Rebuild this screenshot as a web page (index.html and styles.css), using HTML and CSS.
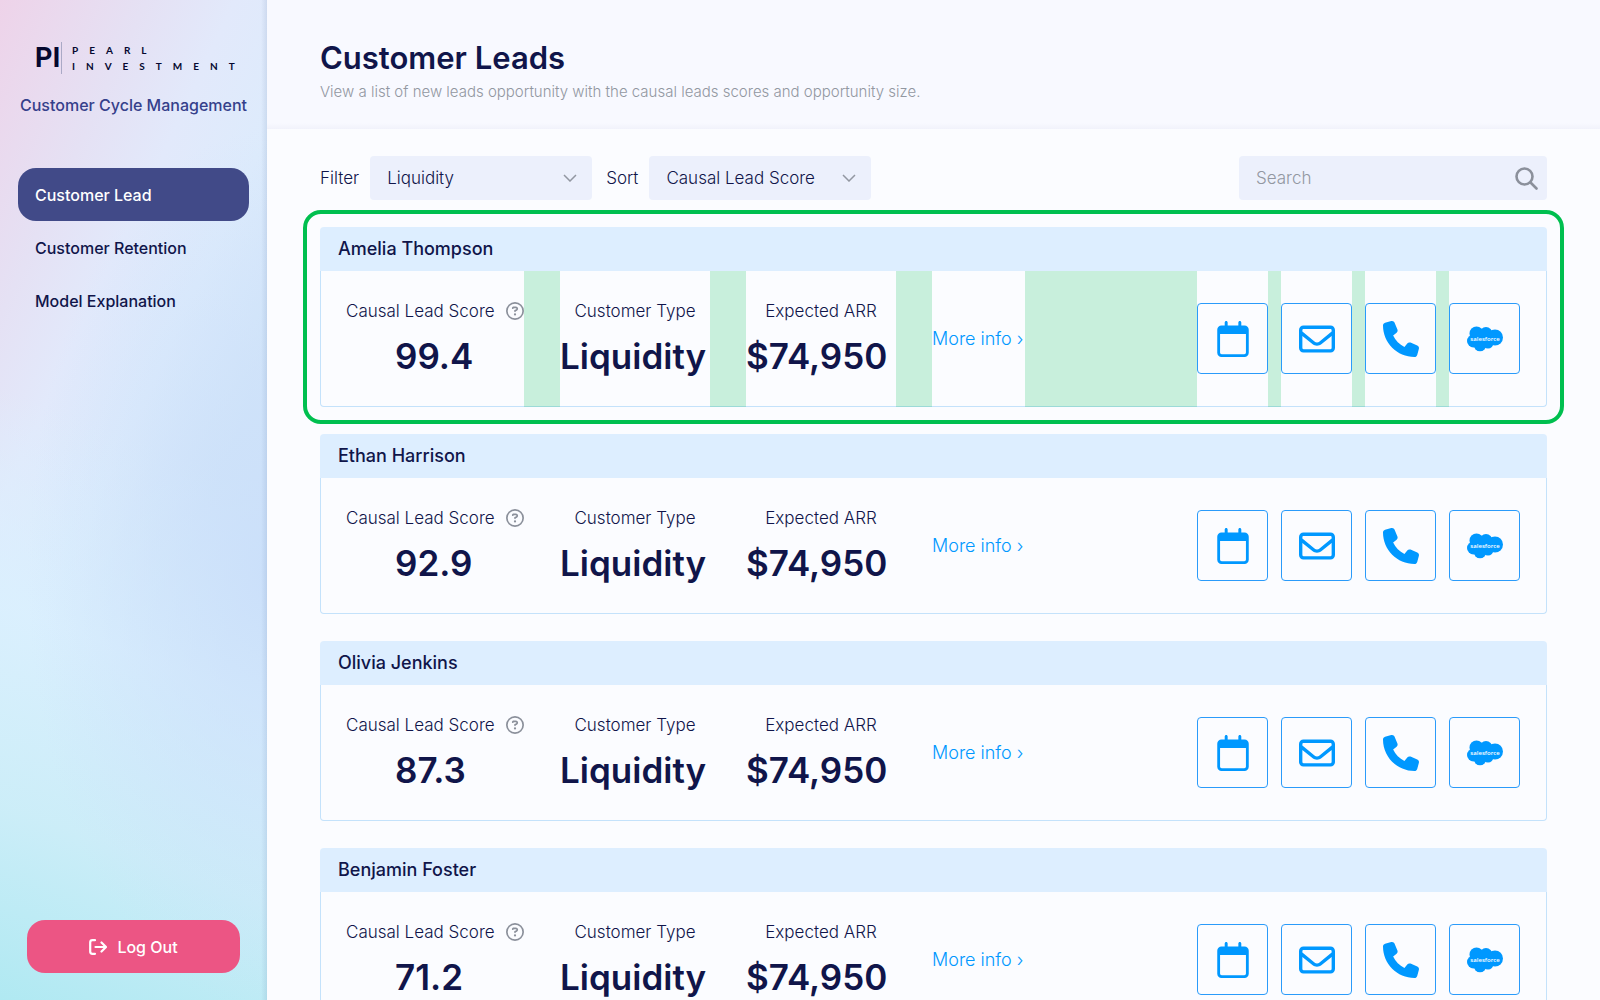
FILE: index.html
```html
<!DOCTYPE html>
<html lang="en">
<head>
<meta charset="utf-8">
<meta name="viewport" content="width=device-width, initial-scale=1">
<title>Customer Leads</title>
<link rel="stylesheet" href="styles.css">
</head>
<body>
<svg class="sprite" aria-hidden="true">
  <symbol id="calendar" viewBox="0 0 448 512"><path d="M148 22c0-12-9-22-21-22s-21 10-21 22V64H60C27 64 0 91 0 124V452c0 33 27 60 60 60H388c33 0 60-27 60-60V124c0-33-27-60-60-60H342V22c0-12-9-22-21-22s-21 10-21 22V64H148V22zM40 184H408V448c0 13-11 24-24 24H64c-13 0-24-11-24-24V184z"/></symbol>
  <symbol id="envelope" viewBox="0 0 512 512"><path d="M64 112c-8.8 0-16 7.2-16 16v22.1L220.5 291.7c20.700 17 50.400 17 71.100 0L464 150.100V128c0-8.800-7.200-16-16-16H64zM48 212.200V384c0 8.800 7.200 16 16 16H448c8.800 0 16-7.200 16-16V212.200L322 328.800c-38.400 31.500-93.700 31.500-132 0L48 212.200zM0 128C0 92.700 28.700 64 64 64H448c35.300 0 64 28.700 64 64V384c0 35.300-28.700 64-64 64H64c-35.300 0-64-28.700-64-64V128z"/></symbol>
  <symbol id="phone" viewBox="0 0 512 512"><path d="M164.900 24.600c-7.700-18.600-28-28.500-47.400-23.200l-88 24C12.100 30.200 0 46 0 64C0 311.400 200.600 512 448 512c18 0 33.800-12.100 38.600-29.500l24-88c5.300-19.400-4.600-39.700-23.200-47.400l-96-40c-16.300-6.800-35.200-2.100-46.300 11.600L304.700 368C234.300 334.700 177.300 277.700 144 207.300L193.300 167c13.700-11.200 18.400-30 11.600-46.300l-40-96z"/></symbol>
  <symbol id="cloud" viewBox="0 0 36 26"><g><circle cx="9.500" cy="7.500" r="7"/><circle cx="19" cy="7.500" r="6.500"/><circle cx="28" cy="11.500" r="8"/><circle cx="6.500" cy="15" r="6.500"/><circle cx="13" cy="19" r="6.300"/><circle cx="21" cy="17" r="5.500"/><rect x="7" y="7" width="20" height="12"/></g><text class="cloud-text" x="18" y="15" text-anchor="middle">salesforce</text></symbol>
  <symbol id="help" viewBox="0 0 512 512"><path d="M464 256A208 208 0 1 0 48 256a208 208 0 1 0 416 0zM0 256a256 256 0 1 1 512 0A256 256 0 1 1 0 256zm169.800-90.700c7.900-22.300 29.100-37.300 52.800-37.300h58.300c34.900 0 63.100 28.300 63.100 63.100c0 22.600-12.100 43.500-31.700 54.800L280 264.400c-.2 13-10.900 23.600-24 23.600c-13.300 0-24-10.700-24-24V250.500c0-8.600 4.600-16.500 12.100-20.800l44.300-25.400c4.700-2.700 7.600-7.700 7.600-13.100c0-8.400-6.800-15.100-15.100-15.100H222.600c-3.400 0-6.400 2.100-7.500 5.300l-.4 1.200c-4.400 12.500-18.200 19-30.600 14.600s-19-18.200-14.600-30.600l.4-1.200zM224 352a32 32 0 1 1 64 0 32 32 0 1 1-64 0z"/></symbol>
</svg>
<div class="app">
  <aside class="sidebar">
    <div class="brand">
      <div class="logo">
        <span class="logo-mark">PI</span>
        <span class="logo-name"><span>PEARL</span><span>INVESTMENT</span></span>
      </div>
      <p class="product">Customer Cycle Management</p>
    </div>
    <nav class="nav">
      <a class="nav-link active" href="#lead" aria-current="page">Customer Lead</a>
      <a class="nav-link" href="#retention">Customer Retention</a>
      <a class="nav-link" href="#model">Model Explanation</a>
    </nav>
    <button class="logout" type="button">
      <svg class="logout-icon" viewBox="0 0 18 16" aria-hidden="true"><path d="M6 1.200H3.500A2.300 2.300 0 0 0 1.200 3.500v9a2.300 2.300 0 0 0 2.300 2.300H6M6.500 8h10M12.500 3.500 17 8l-4.500 4.500"/></svg>
      Log Out
    </button>
  </aside>
  <main class="main">
    <header class="page-header">
      <h1>Customer Leads</h1>
      <p>View a list of new leads opportunity with the causal leads scores and opportunity size.</p>
    </header>
    <div class="content">
      <form class="toolbar">
        <label for="filter">Filter</label>
        <span class="select">
          <select id="filter"><option>Liquidity</option></select>
          <svg class="chevron" viewBox="0 0 14 8" aria-hidden="true"><path d="M1 1l6 6 6-6"/></svg>
        </span>
        <label class="sort-label" for="sort">Sort</label>
        <span class="select">
          <select id="sort"><option>Causal Lead Score</option></select>
          <svg class="chevron" viewBox="0 0 14 8" aria-hidden="true"><path d="M1 1l6 6 6-6"/></svg>
        </span>
        <span class="search">
          <input type="search" placeholder="Search" aria-label="Search">
          <svg class="search-icon" viewBox="0 0 23 23" aria-hidden="true"><circle cx="9.500" cy="9.500" r="8"/><path d="M15.500 15.500l6 6"/></svg>
        </span>
      </form>

      <article class="card highlighted">
        <h2>Amelia Thompson</h2>
        <div class="card-body">
          <div class="stat score"><span class="label">Causal Lead Score <svg class="help"><use href="#help"/></svg></span><strong>99.4</strong></div>
          <i class="gap"></i>
          <div class="stat"><span class="label">Customer Type</span><strong>Liquidity</strong></div>
          <i class="gap"></i>
          <div class="stat"><span class="label">Expected ARR</span><strong>$74,950</strong></div>
          <i class="gap"></i>
          <a class="more" href="#amelia">More info ›</a>
          <i class="gap fill"></i>
          <button class="action" type="button" aria-label="Schedule"><svg class="icon"><use href="#calendar"/></svg></button>
          <i class="gap small"></i>
          <button class="action" type="button" aria-label="Email"><svg class="icon"><use href="#envelope"/></svg></button>
          <i class="gap small"></i>
          <button class="action" type="button" aria-label="Call"><svg class="icon"><use href="#phone"/></svg></button>
          <i class="gap small"></i>
          <button class="action" type="button" aria-label="Salesforce"><svg class="icon"><use href="#cloud"/></svg></button>
        </div>
      </article>

      <article class="card">
        <h2>Ethan Harrison</h2>
        <div class="card-body">
          <div class="stat score"><span class="label">Causal Lead Score <svg class="help"><use href="#help"/></svg></span><strong>92.9</strong></div>
          <i class="gap"></i>
          <div class="stat"><span class="label">Customer Type</span><strong>Liquidity</strong></div>
          <i class="gap"></i>
          <div class="stat"><span class="label">Expected ARR</span><strong>$74,950</strong></div>
          <i class="gap"></i>
          <a class="more" href="#ethan">More info ›</a>
          <i class="gap fill"></i>
          <button class="action" type="button" aria-label="Schedule"><svg class="icon"><use href="#calendar"/></svg></button>
          <i class="gap small"></i>
          <button class="action" type="button" aria-label="Email"><svg class="icon"><use href="#envelope"/></svg></button>
          <i class="gap small"></i>
          <button class="action" type="button" aria-label="Call"><svg class="icon"><use href="#phone"/></svg></button>
          <i class="gap small"></i>
          <button class="action" type="button" aria-label="Salesforce"><svg class="icon"><use href="#cloud"/></svg></button>
        </div>
      </article>

      <article class="card">
        <h2>Olivia Jenkins</h2>
        <div class="card-body">
          <div class="stat score"><span class="label">Causal Lead Score <svg class="help"><use href="#help"/></svg></span><strong>87.3</strong></div>
          <i class="gap"></i>
          <div class="stat"><span class="label">Customer Type</span><strong>Liquidity</strong></div>
          <i class="gap"></i>
          <div class="stat"><span class="label">Expected ARR</span><strong>$74,950</strong></div>
          <i class="gap"></i>
          <a class="more" href="#olivia">More info ›</a>
          <i class="gap fill"></i>
          <button class="action" type="button" aria-label="Schedule"><svg class="icon"><use href="#calendar"/></svg></button>
          <i class="gap small"></i>
          <button class="action" type="button" aria-label="Email"><svg class="icon"><use href="#envelope"/></svg></button>
          <i class="gap small"></i>
          <button class="action" type="button" aria-label="Call"><svg class="icon"><use href="#phone"/></svg></button>
          <i class="gap small"></i>
          <button class="action" type="button" aria-label="Salesforce"><svg class="icon"><use href="#cloud"/></svg></button>
        </div>
      </article>

      <article class="card">
        <h2>Benjamin Foster</h2>
        <div class="card-body">
          <div class="stat score"><span class="label">Causal Lead Score <svg class="help"><use href="#help"/></svg></span><strong>71.2</strong></div>
          <i class="gap"></i>
          <div class="stat"><span class="label">Customer Type</span><strong>Liquidity</strong></div>
          <i class="gap"></i>
          <div class="stat"><span class="label">Expected ARR</span><strong>$74,950</strong></div>
          <i class="gap"></i>
          <a class="more" href="#benjamin">More info ›</a>
          <i class="gap fill"></i>
          <button class="action" type="button" aria-label="Schedule"><svg class="icon"><use href="#calendar"/></svg></button>
          <i class="gap small"></i>
          <button class="action" type="button" aria-label="Email"><svg class="icon"><use href="#envelope"/></svg></button>
          <i class="gap small"></i>
          <button class="action" type="button" aria-label="Call"><svg class="icon"><use href="#phone"/></svg></button>
          <i class="gap small"></i>
          <button class="action" type="button" aria-label="Salesforce"><svg class="icon"><use href="#cloud"/></svg></button>
        </div>
      </article>
    </div>
  </main>
</div>
</body>
</html>
```
FILE: styles.css
```css
:root {
  --navy: #10154a;
  --grey: #9297a1;
  --blue: #0098ff;
  --pale: #ddeeff;
  --field: #ecf0fc;
}

* { box-sizing: border-box; }

body {
  margin: 0;
  background: #fbfcff;
  color: var(--navy);
  font-family: Inter, "Liberation Sans", sans-serif;
  font-size: 17px;
  line-height: 24px;
  font-weight: 300;
}

h1, h2, p { margin: 0; }
a { color: inherit; text-decoration: none; }
button, input, select { font: inherit; color: inherit; }
button { cursor: pointer; }
.sprite { display: none; }

.app { display: flex; height: 100vh; overflow: hidden; }

/* Sidebar */
.sidebar {
  flex: 0 0 267px;
  display: flex;
  flex-direction: column;
  padding: 41px 18px 27px;
  background:
    linear-gradient(to left, rgba(70, 100, 150, 0.12), transparent 6px),
    radial-gradient(ellipse 240px 440px at 100% 57%, rgba(202, 223, 250, 0.9), transparent),
    linear-gradient(20deg, #b0e9f2 0%, rgba(203, 238, 248, 0.9) 18%, rgba(218, 240, 254, 0.9) 36%, transparent 56%),
    linear-gradient(115deg, #eed3e9 0%, #e5e1f4 20%, #e2e9fb 32%, #ddebfc 45%, #d4e6f9 60%);
}

.brand { display: flex; flex-direction: column; gap: 18px; }
.logo { display: flex; height: 34px; align-items: center; padding-left: 17px; color: #05082f; }
.logo-mark {
  width: 27px;
  border-right: 1px solid #aaa9c6;
  font: 700 27px/32px Roboto, sans-serif;
}
.logo-name {
  display: flex;
  flex-direction: column;
  padding-left: 10px;
  font: 700 10px/16px Lato, sans-serif;
  letter-spacing: 11px;
}
.product { color: #35408b; font-size: 16px; font-weight: 500; text-align: center; white-space: nowrap; }

.nav { display: flex; flex-direction: column; margin-top: 51px; }
.nav-link { padding: 15px 17px 14px; border-radius: 18px; font-size: 16px; font-weight: 500; }
.nav-link.active { background: #414a88; color: #fff; }

.logout {
  display: flex;
  justify-content: center;
  align-items: center;
  gap: 10px;
  height: 53px;
  margin: auto 9px 0;
  border: 0;
  border-radius: 18px;
  background: #ec5584;
  color: #fff;
  font-size: 16px;
  font-weight: 500;
}
.logout-icon { width: 18px; height: 16px; fill: none; stroke: currentColor; stroke-width: 2.2; stroke-linecap: round; stroke-linejoin: round; }

/* Page */
.main { flex: 1; min-width: 0; }
.page-header {
  height: 129px;
  padding: 38px 53px 0;
  background: linear-gradient(to top, #f1f2fb, #f8f9ff 6px);
}
h1 { font-size: 31px; line-height: 40px; font-weight: 600; }
.page-header p { margin-top: 2px; color: var(--grey); font-size: 15px; }

.content { display: flex; flex-direction: column; gap: 27px; padding: 27px 53px; }
.toolbar { display: flex; align-items: center; height: 44px; }
.toolbar label { margin-right: 11px; }
.toolbar .sort-label { margin-left: 14px; }

.select { display: grid; align-items: center; width: 222px; }
.select > * { grid-area: 1 / 1; }
.select select {
  appearance: none;
  width: 100%;
  height: 44px;
  padding: 0 36px 0 17px;
  border: 0;
  border-radius: 4px;
  background: var(--field);
}
.chevron { justify-self: end; width: 14px; height: 8px; margin-right: 15px; fill: none; stroke: var(--grey); stroke-width: 1.5; pointer-events: none; }

.search {
  display: flex;
  align-items: center;
  width: 308px;
  height: 44px;
  margin-left: auto;
  padding: 0 9px 0 17px;
  border-radius: 4px;
  background: var(--field);
}
.search input { flex: 1; min-width: 0; padding: 0; border: 0; background: none; appearance: none; }
.search input::placeholder { color: var(--grey); opacity: 1; }
.search-icon { width: 23px; height: 23px; fill: none; stroke: #8b909b; stroke-width: 2.6; stroke-linecap: round; }

/* Lead card */
.card { position: relative; }
.card h2 {
  height: 44px;
  padding: 10px 18px;
  border-radius: 4px 4px 0 0;
  background: var(--pale);
  font-size: 18px;
  font-weight: 500;
}
.card-body {
  display: flex;
  align-items: center;
  height: 136px;
  padding: 0 26px 0 25px;
  border: 1px solid #c4e2fb;
  border-top: 0;
  border-radius: 0 0 4px 4px;
}
.card.highlighted::after {
  content: "";
  position: absolute;
  inset: -17px;
  border: 4px solid #00bf4f;
  border-radius: 18px;
  pointer-events: none;
}

.gap { flex: 0 0 36px; align-self: stretch; margin-bottom: -1px; }
.gap.small { flex-basis: 13px; }
.gap.fill { flex: 1; }
.highlighted .gap { background: rgba(0, 190, 80, 0.2); }

.stat { flex: 0 0 150px; display: flex; flex-direction: column; gap: 11px; white-space: nowrap; }
.stat.score { flex-basis: 178px; }
.label { display: flex; align-items: center; justify-content: center; }
.score .label { justify-content: space-between; }
.help { width: 18px; height: 18px; fill: #8b909b; }
.stat strong { font-size: 35px; line-height: 44px; font-weight: 600; }
.score strong { padding-left: 49px; }
.more { flex: 0 0 93px; color: var(--blue); font-size: 18px; white-space: nowrap; }

.action {
  flex: 0 0 71px;
  display: grid;
  place-items: center;
  height: 71px;
  padding: 0;
  border: 1px solid #2a9bfa;
  border-radius: 4px;
  background: #fbfcff;
}
.icon { width: 36px; height: 36px; fill: var(--blue); }
.cloud-text { fill: #fff; font: 600 6px "Open Sans", sans-serif; }
```
